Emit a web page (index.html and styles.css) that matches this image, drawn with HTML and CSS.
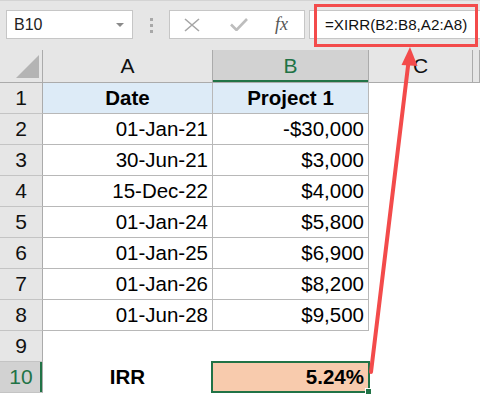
FILE: index.html
```html
<!DOCTYPE html>
<html lang="en">
<head>
  <meta charset="UTF-8">
  <title>XIRR</title>
  <link rel="stylesheet" href="styles.css">
</head>
<body>

  <div class="toolbar">
    <div class="namebox">
      <span>B10</span>
      <span class="caret"></span>
    </div>
    <div class="grip"><i></i><i></i><i></i></div>
    <div class="fnbox">
      <svg class="ico" width="16" height="14" viewBox="0 0 16 14">
        <path d="M1 1 L15 13 M15 1 L1 13" stroke="#a6a6a6" stroke-width="1.6" fill="none"/>
      </svg>
      <svg class="ico" width="18" height="13" viewBox="0 0 18 13">
        <path d="M1 6.5 L6.5 12 L17 1" stroke="#bdbdbd" stroke-width="2.6" fill="none"/>
      </svg>
      <span class="fx">fx</span>
    </div>
    <div class="formula">=XIRR(B2:B8,A2:A8)</div>
  </div>

  <div class="sheet">
    <div class="hd corner"><span class="tri"></span></div>
    <div class="hd">A</div>
    <div class="hd sel-col">B</div>
    <div class="hd">C</div>
    <div class="hd"></div>

    <div class="rn">1</div>
    <div class="cell tb head">Date</div>
    <div class="cell tb head">Project 1</div>
    <div class="cell"></div>
    <div class="cell"></div>

    <div class="rn">2</div>
    <div class="cell tb num">01-Jan-21</div>
    <div class="cell tb num">-$30,000</div>
    <div class="cell"></div>
    <div class="cell"></div>

    <div class="rn">3</div>
    <div class="cell tb num">30-Jun-21</div>
    <div class="cell tb num">$3,000</div>
    <div class="cell"></div>
    <div class="cell"></div>

    <div class="rn">4</div>
    <div class="cell tb num">15-Dec-22</div>
    <div class="cell tb num">$4,000</div>
    <div class="cell"></div>
    <div class="cell"></div>

    <div class="rn">5</div>
    <div class="cell tb num">01-Jan-24</div>
    <div class="cell tb num">$5,800</div>
    <div class="cell"></div>
    <div class="cell"></div>

    <div class="rn">6</div>
    <div class="cell tb num">01-Jan-25</div>
    <div class="cell tb num">$6,900</div>
    <div class="cell"></div>
    <div class="cell"></div>

    <div class="rn">7</div>
    <div class="cell tb num">01-Jan-26</div>
    <div class="cell tb num">$8,200</div>
    <div class="cell"></div>
    <div class="cell"></div>

    <div class="rn">8</div>
    <div class="cell tb num">01-Jun-28</div>
    <div class="cell tb num">$9,500</div>
    <div class="cell"></div>
    <div class="cell"></div>

    <div class="rn">9</div>
    <div class="cell"></div>
    <div class="cell"></div>
    <div class="cell"></div>
    <div class="cell"></div>

    <div class="rn sel-row">10</div>
    <div class="cell bold center">IRR</div>
    <div class="cell bold num result">5.24%</div>
    <div class="cell"></div>
    <div class="cell"></div>
  </div>

  <div class="callout"></div>
  <svg class="arrow" width="480" height="394" viewBox="0 0 480 394">
    <line x1="371" y1="372" x2="408.5" y2="62" stroke="#f34b4b" stroke-width="4" stroke-linecap="round"/>
    <polygon points="410,47 401.5,65 417.5,66" fill="#f34b4b"/>
  </svg>

</body>
</html>
```

FILE: styles.css
```css
body {
  margin: 0;
  width: 480px;
  height: 394px;
  overflow: hidden;
  position: relative;
  background: #fff;
  font-family: "Liberation Sans", Arial, sans-serif;
}

.toolbar {
  display: flex;
  align-items: flex-start;
  height: 50px;
  padding-top: 10px;
  box-sizing: border-box;
  background: #e6e6e6;
  border-top: 1px solid #d4d4d4;
}

.namebox {
  display: flex;
  align-items: center;
  justify-content: space-between;
  width: 127px;
  height: 29px;
  margin-top: -1px;
  margin-left: 6px;
  padding: 0 8px 0 7px;
  box-sizing: border-box;
  background: #fff;
  border: 1px solid #c6c6c6;
  font-size: 16px;
  color: #222;
}

.caret {
  width: 0;
  height: 0;
  border-left: 4px solid transparent;
  border-right: 4px solid transparent;
  border-top: 4px solid #8a8a8a;
}

.grip {
  display: flex;
  flex-direction: column;
  gap: 3px;
  margin: 7px 0 0 17px;
}

.grip i {
  display: block;
  width: 3px;
  height: 3px;
  background: #a8a8a8;
}

.fnbox {
  display: flex;
  align-items: center;
  width: 136px;
  height: 29px;
  margin-top: -1px;
  margin-left: 16px;
  padding-left: 14px;
  box-sizing: border-box;
  background: #fff;
  border: 1px solid #c6c6c6;
}

.ico {
  display: block;
  margin-right: 30px;
}

.fx {
  margin-left: -3px;
  font-family: "Liberation Serif", serif;
  font-style: italic;
  font-size: 18px;
  color: #555;
}

.formula {
  flex: 1;
  height: 29px;
  margin-top: -1px;
  margin-left: 4px;
  padding-left: 15px;
  box-sizing: border-box;
  background: #fff;
  border: 1px solid #c6c6c6;
  border-right: none;
  font-size: 15.2px;
  line-height: 27px;
  color: #111;
}

.sheet {
  display: grid;
  grid-template-columns: 43px 170px 156px 104px 7px;
  grid-template-rows: 33px;
  grid-auto-rows: 31px;
}

.hd {
  background: #e6e6e6;
  border-right: 1px solid #ababab;
  border-bottom: 1px solid #ababab;
  font-size: 21px;
  line-height: 32px;
  text-align: center;
  color: #111;
}

.corner {
  position: relative;
}

.tri {
  position: absolute;
  left: 16px;
  bottom: 4px;
  width: 0;
  height: 0;
  border-left: 23px solid transparent;
  border-bottom: 23px solid #b4b4b4;
}

.sel-col {
  background: #d2d2d2;
  color: #217346;
  box-shadow: inset 0 -2px #217346;
}

.rn {
  background: #e6e6e6;
  border-right: 1px solid #ababab;
  border-bottom: 1px solid #c4c4c4;
  font-size: 21px;
  line-height: 30px;
  text-align: center;
  color: #111;
}

.sel-row {
  background: #d2d2d2;
  color: #217346;
  box-shadow: inset -2px 0 #217346;
}

.cell {
  border-right: 1px solid transparent;
  border-bottom: 1px solid transparent;
  font-size: 20.5px;
  line-height: 30px;
  color: #000;
  white-space: nowrap;
}

.tb {
  border-color: #b8b8b8;
}

.head {
  background: #ddebf7;
  font-weight: bold;
  text-align: center;
}

.num {
  text-align: right;
  padding-right: 4px;
}

.bold {
  font-weight: bold;
}

.center {
  text-align: center;
}

.result {
  position: relative;
  background: #f8cbad;
}

.result::after {
  content: "";
  position: absolute;
  left: -2px;
  top: -1px;
  right: -2px;
  bottom: -1px;
  border: 2px solid #217346;
}

.result::before {
  content: "";
  position: absolute;
  right: -4px;
  bottom: -3px;
  width: 5px;
  height: 5px;
  background: #217346;
  border: 1px solid #fff;
  z-index: 1;
}

.callout {
  position: absolute;
  left: 314px;
  top: 4px;
  width: 164px;
  height: 43px;
  box-sizing: border-box;
  border: 3px solid #f34b4b;
}

.arrow {
  position: absolute;
  left: 0;
  top: 0;
  pointer-events: none;
}
```
